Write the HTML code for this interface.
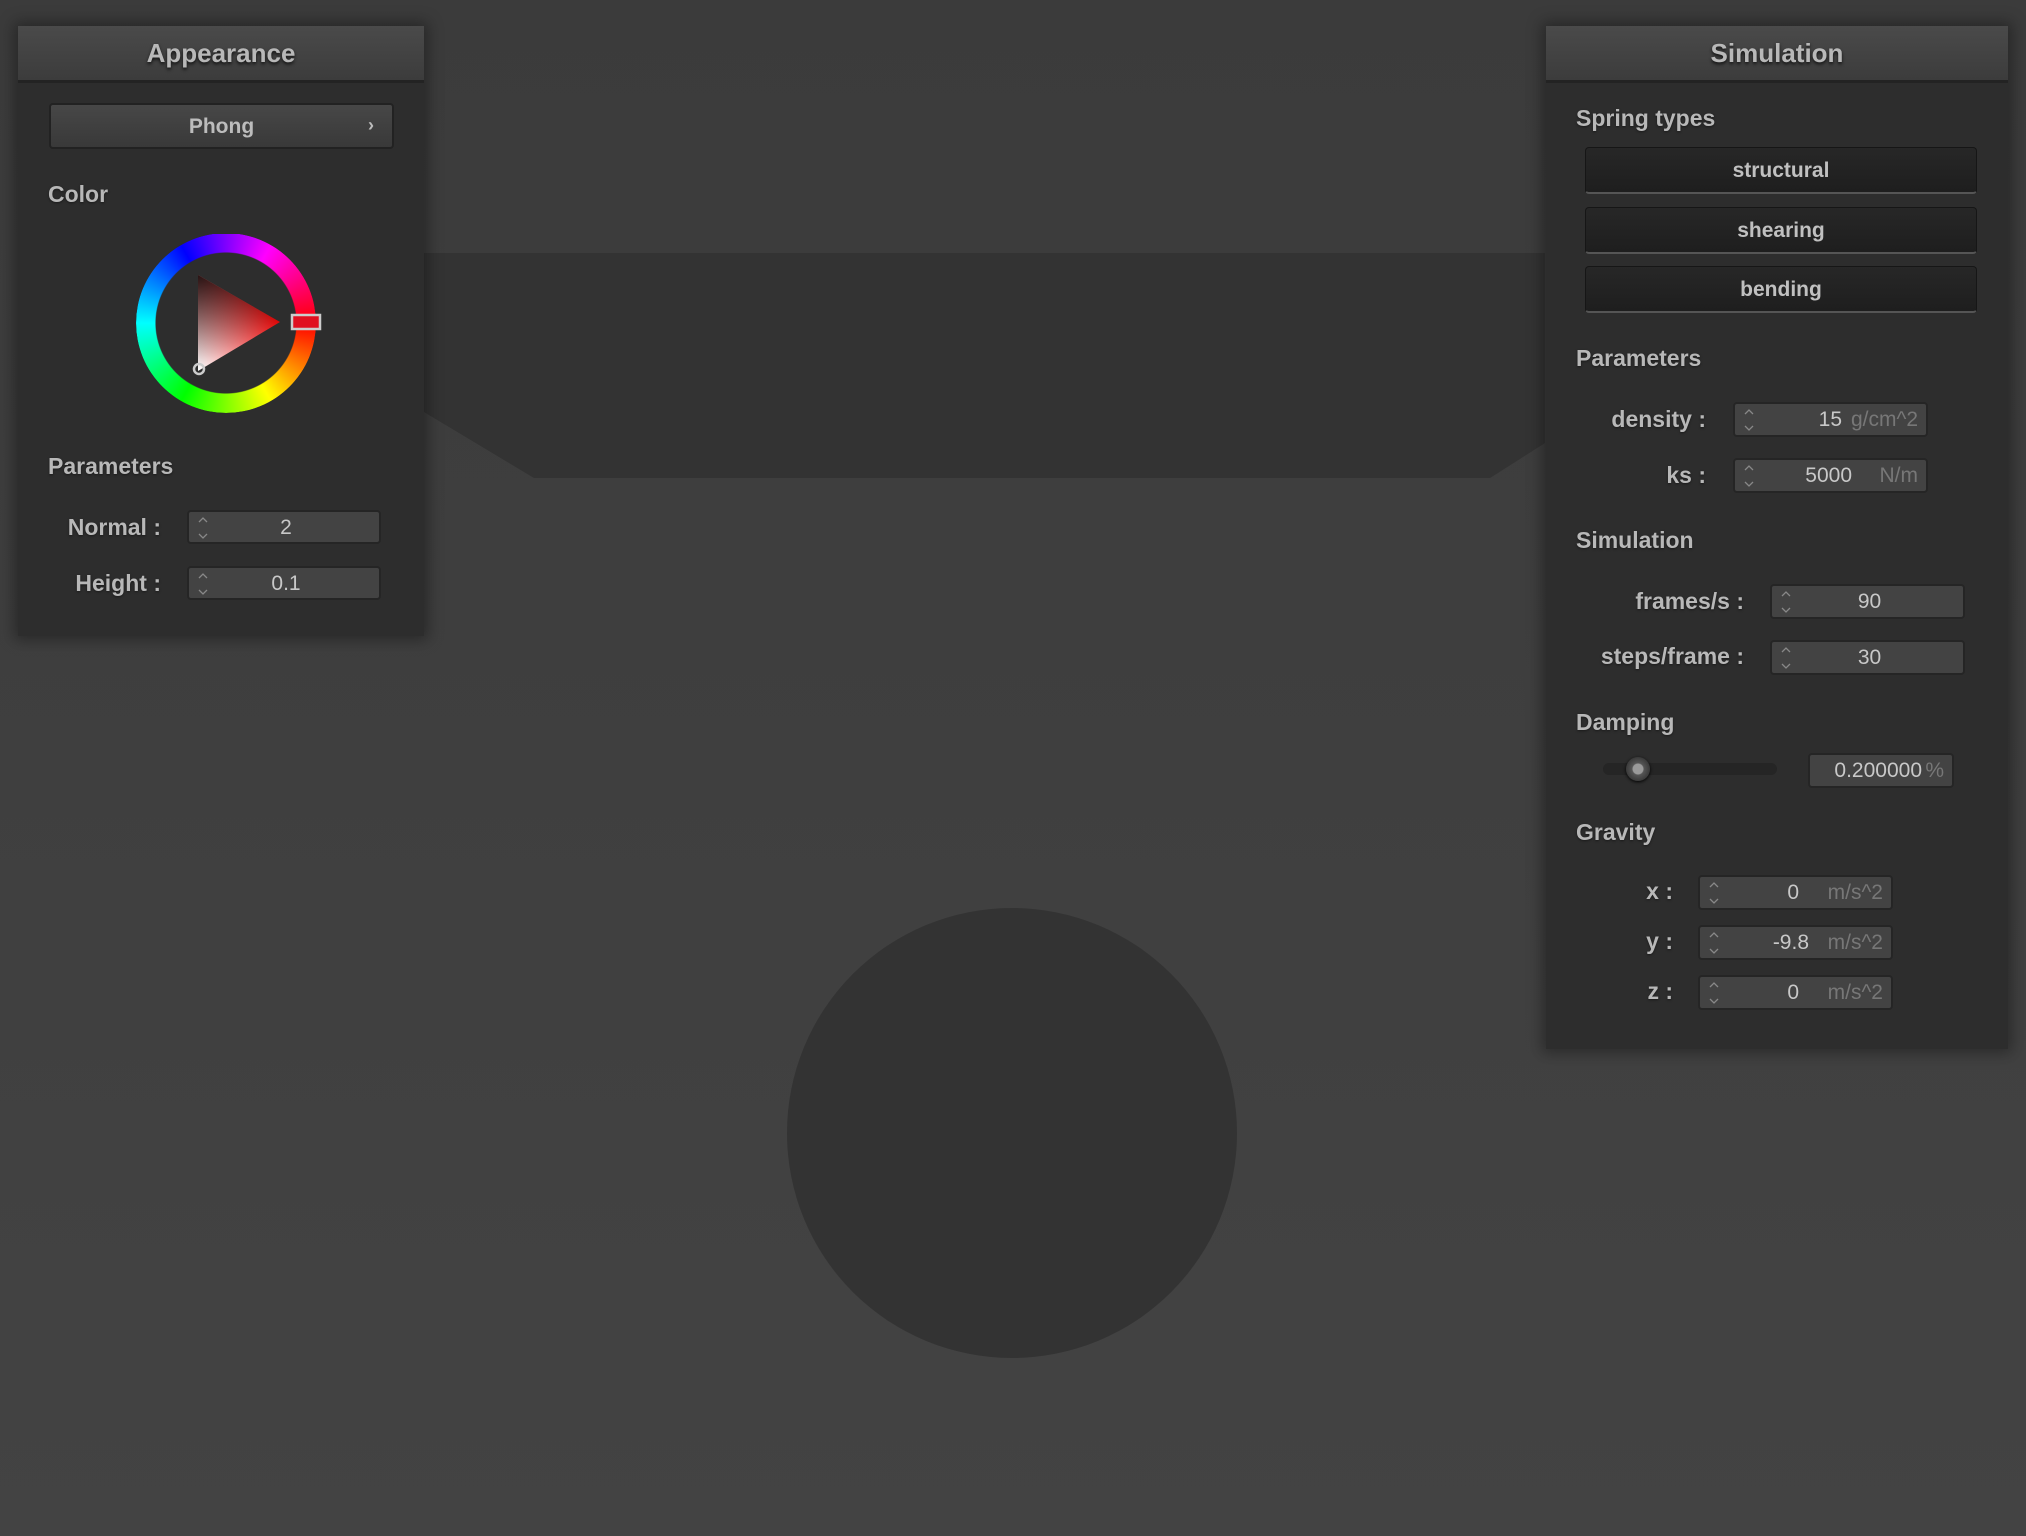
<!DOCTYPE html>
<html><head><meta charset="utf-8"><style>
*{margin:0;padding:0;box-sizing:border-box}
body{width:2026px;height:1536px;overflow:hidden;background:#404040;font-family:"Liberation Sans",sans-serif;position:relative}
.abs{position:absolute}
.panel{position:absolute;background:#2d2d2d;box-shadow:0 0 14px 4px rgba(0,0,0,.35)}
.hdr{position:absolute;left:0;top:0;right:0;height:57px;background:linear-gradient(#4a4a4a,#3c3c3c);border-bottom:3px solid #232323;color:#b8b8b8;font-size:26px;font-weight:bold;text-align:center;line-height:55px;text-shadow:0 2px 3px #111}
.lab{position:absolute;color:#b8b8b8;font-weight:bold;font-size:23px;line-height:28px;white-space:nowrap;text-shadow:0 1px 2px #1a1a1a}
.r{text-align:right}
.inp{position:absolute;background:#434343;border:2px solid #252525;border-radius:4px;color:#c8c8c8;font-size:21px;line-height:32px}
.inp .v{position:absolute;top:0}
.inp .u{position:absolute;top:0;color:#777}
.btn{position:absolute;background:linear-gradient(#272727,#1e1e1e);border:1px solid #161616;border-bottom:2px solid #555;border-radius:4px;color:#c0c0c0;font-size:21px;font-weight:bold;text-align:center}
.sp{position:absolute;left:8px;top:4px}
</style></head><body>
<svg class="abs" style="left:0;top:0" width="2026" height="1536">
<defs><linearGradient id="bg" x1="0" y1="0" x2="0" y2="1"><stop offset="0" stop-color="#3b3b3b"/><stop offset="1" stop-color="#434343"/></linearGradient></defs>
<rect width="2026" height="1536" fill="url(#bg)"/>
<polygon points="424,253 1545,253 1545,443 1490,478 534,478 424,412" fill="#333"/>
<circle cx="1012" cy="1133" r="225" fill="#333"/>
</svg>

<div class="panel" style="left:18px;top:26px;width:406px;height:610px">
<div class="hdr">Appearance</div>
<div class="btn" style="left:31px;top:77px;width:345px;height:46px;background:linear-gradient(#474747,#393939);border:2px solid #222;line-height:44px;color:#bcbcbc">Phong<span style="position:absolute;right:18px;top:-2px;font-size:18px">›</span></div>
<div class="lab" style="left:30px;top:154px">Color</div>
<svg class="abs" style="left:110px;top:208px" width="230" height="200" viewBox="110 208 230 200">
<defs>
<linearGradient id="tri1" x1="198" y1="371" x2="280" y2="322" gradientUnits="userSpaceOnUse"><stop offset="0" stop-color="#fff"/><stop offset="1" stop-color="#f00"/></linearGradient>
<linearGradient id="tri2" x1="180" y1="249" x2="215" y2="330" gradientUnits="userSpaceOnUse"><stop offset="0" stop-color="#000" stop-opacity=".85"/><stop offset="1" stop-color="#000" stop-opacity="0"/></linearGradient>
</defs>
<g transform="translate(208,297)">
<foreignObject x="-90" y="-90" width="180" height="180"><div xmlns="http://www.w3.org/1999/xhtml" style="width:180px;height:180px;border-radius:50%;background:conic-gradient(from 90deg,#f00,#ff0 60deg,#0f0 120deg,#0ff 180deg,#00f 240deg,#f0f 300deg,#f00 360deg);-webkit-mask:radial-gradient(circle,transparent 70px,#000 71px);mask:radial-gradient(circle,transparent 70px,#000 71px)"></div></foreignObject>
</g>
<polygon points="180,249 262,296 180,345" fill="url(#tri1)"/>
<polygon points="180,249 262,296 180,345" fill="url(#tri2)"/>
<circle cx="181" cy="343" r="5" fill="none" stroke="#ccc" stroke-width="2.5"/>
<rect x="274" y="289" width="28" height="14" fill="#e01020" stroke="#ccc" stroke-width="2.5"/>
</svg>
<div class="lab" style="left:30px;top:426px">Parameters</div>
<div class="lab r" style="left:0;width:143px;top:487px">Normal :</div>
<div class="inp" style="left:169px;top:484px;width:194px;height:34px"><svg class="sp" width="12" height="24"><path d="M2 6l4-4 4 4M2 18l4 4 4-4" stroke="#888" fill="none" stroke-width="1.3"/></svg><span class="v" style="left:0;width:194px;text-align:center">2</span></div>
<div class="lab r" style="left:0;width:143px;top:543px">Height :</div>
<div class="inp" style="left:169px;top:540px;width:194px;height:34px"><svg class="sp" width="12" height="24"><path d="M2 6l4-4 4 4M2 18l4 4 4-4" stroke="#888" fill="none" stroke-width="1.3"/></svg><span class="v" style="left:0;width:194px;text-align:center">0.1</span></div>
</div>

<div class="panel" style="left:1546px;top:26px;width:462px;height:1023px">
<div class="hdr">Simulation</div>
<div class="lab" style="left:30px;top:78px">Spring types</div>
<div class="btn" style="left:39px;top:121px;width:392px;height:47px;line-height:46px">structural</div>
<div class="btn" style="left:39px;top:181px;width:392px;height:47px;line-height:46px">shearing</div>
<div class="btn" style="left:39px;top:240px;width:392px;height:47px;line-height:46px">bending</div>
<div class="lab" style="left:30px;top:318px">Parameters</div>

<div class="lab r" style="left:0;width:160px;top:379px">density :</div>
<div class="inp" style="left:187px;top:376px;width:195px;height:35px"><svg class="sp" width="12" height="24"><path d="M2 6l4-4 4 4M2 18l4 4 4-4" stroke="#888" fill="none" stroke-width="1.3"/></svg><span class="v" style="right:84px">15</span><span class="u" style="right:8px">g/cm^2</span></div>
<div class="lab r" style="left:0;width:160px;top:435px">ks :</div>
<div class="inp" style="left:187px;top:432px;width:195px;height:35px"><svg class="sp" width="12" height="24"><path d="M2 6l4-4 4 4M2 18l4 4 4-4" stroke="#888" fill="none" stroke-width="1.3"/></svg><span class="v" style="right:74px">5000</span><span class="u" style="right:8px">N/m</span></div>

<div class="lab" style="left:30px;top:500px">Simulation</div>
<div class="lab r" style="left:0;width:198px;top:561px">frames/s :</div>
<div class="inp" style="left:224px;top:558px;width:195px;height:35px"><svg class="sp" width="12" height="24"><path d="M2 6l4-4 4 4M2 18l4 4 4-4" stroke="#888" fill="none" stroke-width="1.3"/></svg><span class="v" style="left:0;width:195px;text-align:center">90</span></div>
<div class="lab r" style="left:0;width:198px;top:616px">steps/frame :</div>
<div class="inp" style="left:224px;top:614px;width:195px;height:35px"><svg class="sp" width="12" height="24"><path d="M2 6l4-4 4 4M2 18l4 4 4-4" stroke="#888" fill="none" stroke-width="1.3"/></svg><span class="v" style="left:0;width:195px;text-align:center">30</span></div>

<div class="lab" style="left:30px;top:682px">Damping</div>
<div class="abs" style="left:57px;top:737px;width:174px;height:12px;background:#252525;border-radius:6px"></div>
<div class="abs" style="left:80px;top:731px;width:24px;height:24px;border-radius:50%;background:radial-gradient(circle,#9a9a9a 5px,#555 6px,#3a3a3a 12px);box-shadow:0 1px 3px #000"></div>
<div class="inp" style="left:262px;top:727px;width:146px;height:35px"><span class="v" style="right:30px">0.200000</span><span class="u" style="right:8px">%</span></div>

<div class="lab" style="left:30px;top:792px">Gravity</div>
<div class="lab r" style="left:0;width:127px;top:851px">x :</div>
<div class="inp" style="left:152px;top:849px;width:195px;height:35px"><svg class="sp" width="12" height="24"><path d="M2 6l4-4 4 4M2 18l4 4 4-4" stroke="#888" fill="none" stroke-width="1.3"/></svg><span class="v" style="right:92px">0</span><span class="u" style="right:8px">m/s^2</span></div>
<div class="lab r" style="left:0;width:127px;top:901px">y :</div>
<div class="inp" style="left:152px;top:899px;width:195px;height:35px"><svg class="sp" width="12" height="24"><path d="M2 6l4-4 4 4M2 18l4 4 4-4" stroke="#888" fill="none" stroke-width="1.3"/></svg><span class="v" style="right:82px">-9.8</span><span class="u" style="right:8px">m/s^2</span></div>
<div class="lab r" style="left:0;width:127px;top:951px">z :</div>
<div class="inp" style="left:152px;top:949px;width:195px;height:35px"><svg class="sp" width="12" height="24"><path d="M2 6l4-4 4 4M2 18l4 4 4-4" stroke="#888" fill="none" stroke-width="1.3"/></svg><span class="v" style="right:92px">0</span><span class="u" style="right:8px">m/s^2</span></div>
</div>
</body></html>
